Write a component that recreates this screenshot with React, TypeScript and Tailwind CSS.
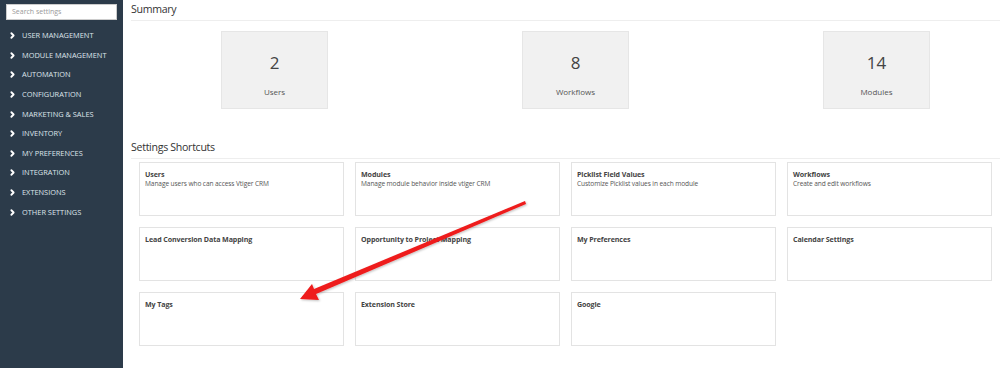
import { ChevronRight } from "lucide-react";

const menu = [
  "USER MANAGEMENT",
  "MODULE MANAGEMENT",
  "AUTOMATION",
  "CONFIGURATION",
  "MARKETING & SALES",
  "INVENTORY",
  "MY PREFERENCES",
  "INTEGRATION",
  "EXTENSIONS",
  "OTHER SETTINGS",
];

const summary = [
  { count: 2, label: "Users" },
  { count: 8, label: "Workflows" },
  { count: 14, label: "Modules" },
];

const shortcuts = [
  { title: "Users", desc: "Manage users who can access Vtiger CRM" },
  { title: "Modules", desc: "Manage module behavior inside vtiger CRM" },
  { title: "Picklist Field Values", desc: "Customize Picklist values in each module" },
  { title: "Workflows", desc: "Create and edit workflows" },
  { title: "Lead Conversion Data Mapping" },
  { title: "Opportunity to Project Mapping" },
  { title: "My Preferences" },
  { title: "Calendar Settings" },
  { title: "My Tags" },
  { title: "Extension Store" },
  { title: "Google" },
];

export default function App() {
  return (
    <div
      className="relative flex h-[368px] w-[1000px] overflow-hidden bg-white text-[#333]"
      style={{ fontFamily: '"Open Sans", "Liberation Sans", sans-serif' }}
    >
      <aside className="w-[123px] shrink-0 bg-[#2c3b4a] pt-1">
        <div className="mx-[6px] h-4 border border-[#ccc] bg-white pl-[5px] text-[7px] leading-[14px] text-[#999]">
          Search settings
        </div>
        <ul className="mt-[6px] flex flex-col">
          {menu.map((m) => (
            <li key={m} className="flex h-[19.6px] items-center pl-[8px] text-[7.4px] text-[#dfe5ea]">
              <ChevronRight className="mr-[5px] h-[9px] w-[9px] text-white" strokeWidth={5} />
              {m}
            </li>
          ))}
        </ul>
      </aside>

      <main className="flex-1">
        <h2 className="mx-[8px] border-b border-[#eee] pt-[2px] pb-[3px] text-[10.6px] leading-[15px] tracking-[-0.3px]">
          Summary
        </h2>
        <div className="mt-[10px] grid grid-cols-[301px_301px_301px] pl-[1px]">
          {summary.map((s) => (
            <div key={s.label} className="flex justify-center">
              <div className="flex h-[78px] w-[107px] flex-col items-center border border-[#e6e6e6] bg-[#f1f1f1]">
                <span className="mt-[20px] text-[17px] leading-[22px] text-[#444]">{s.count}</span>
                <span className="mt-[12px] text-[8px] text-[#555]">{s.label}</span>
              </div>
            </div>
          ))}
        </div>

        <h2 className="mx-[8px] mt-[31px] border-b border-[#eee] pb-[3px] text-[10.6px] leading-[15px] tracking-[-0.3px]">
          Settings Shortcuts
        </h2>
        <div className="ml-[16px] mt-[3px] grid grid-cols-[205px_205px_205px_205px] gap-x-[11px] gap-y-[11px]">
          {shortcuts.map((s) => (
            <div key={s.title} className="h-[54px] border border-[#e3e3e3] bg-white px-[5px] pt-[6px]">
              <div className="text-[7.1px] font-bold leading-[10px] tracking-[-0.1px] text-[#444]">{s.title}</div>
              {s.desc && (
                <div className="text-[6.6px] leading-[10px] tracking-[-0.1px] text-[#555]">{s.desc}</div>
              )}
            </div>
          ))}
        </div>
      </main>

      <svg className="pointer-events-none absolute left-0 top-0" width="1000" height="368">
        <defs>
          <filter id="sh" x="-10%" y="-10%" width="120%" height="120%">
            <feDropShadow dx="1" dy="1" stdDeviation="1" floodColor="#000" floodOpacity="0.25" />
          </filter>
        </defs>
        <polygon
          filter="url(#sh)"
          fill="#ee1b1b"
          points="525,201 526,204 316,294 319,300 300,299 312,284 314,289"
        />
      </svg>
    </div>
  );
}
